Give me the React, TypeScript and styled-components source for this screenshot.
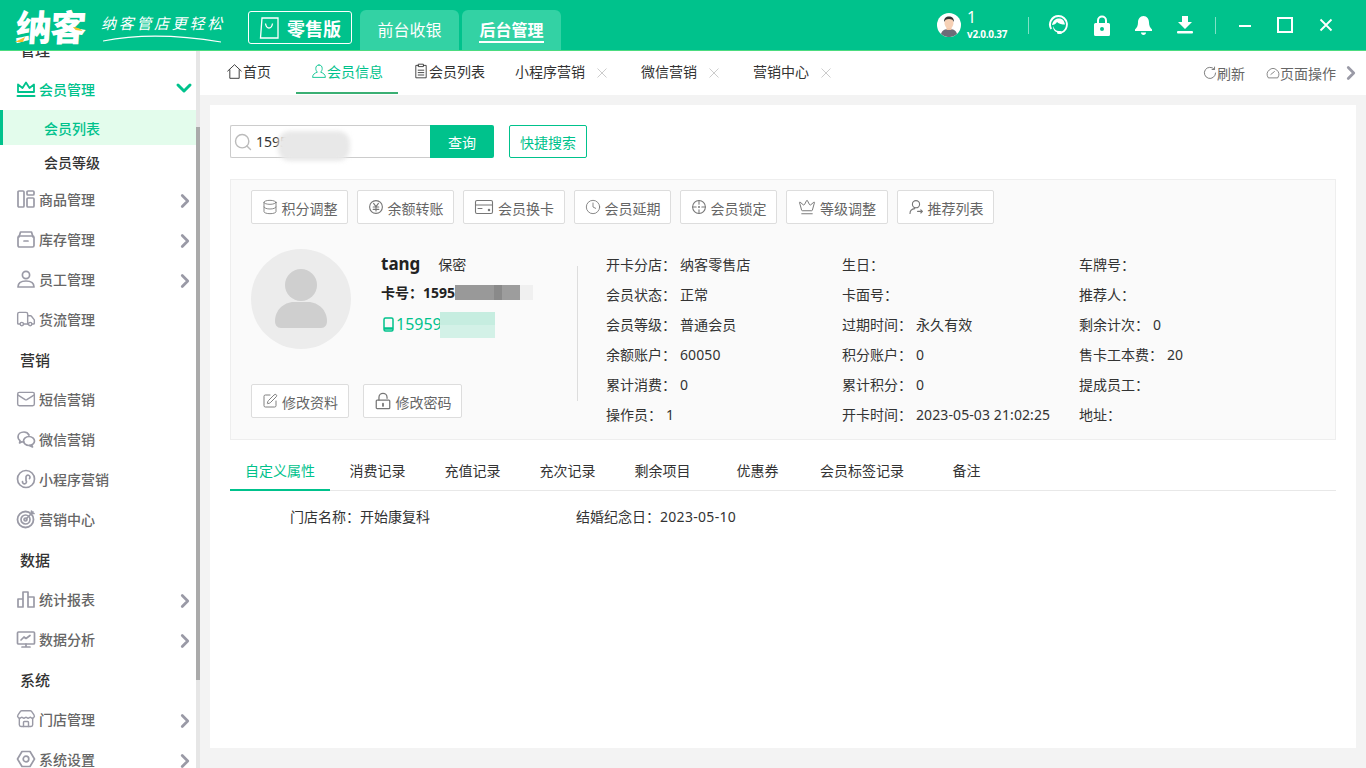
import React, { ReactNode } from "react";
import styled, { createGlobalStyle } from "styled-components";
import { ChevronRight, ChevronDown, Truck, Mail, Store, SquarePen, Database, Clock, Crown, Search } from "lucide-react";

const GREEN = "#00c28c";

const Global = createGlobalStyle`
  html, body {
    margin: 0;
    height: 100%;
    overflow: hidden;
    background: #f3f3f3;
    font-family: "Noto Sans", "Noto Sans CJK SC", sans-serif;
    font-size: 14px;
    color: #333;
  }
  * { box-sizing: border-box; }
`;

//header
const Page = styled.div`
  width: 1366px;
  height: 768px;
  display: flex;
  flex-direction: column;
  overflow: hidden;
`;

const Header = styled.header`
  height: 51px;
  flex: none;
  display: flex;
  align-items: flex-start;
  background: ${GREEN};
  border-bottom: 1px solid #4cdc80;
  padding-left: 15px;
`;

const Logo = styled.div`
  width: 83px;
  height: 50px;
  flex: none;
  position: relative;
  color: #fff;
  font-size: 36px;
  line-height: 56px;
  font-weight: 900;
  letter-spacing: -1.500px;
  padding-left: 1px;
  transform: skewX(-4deg);
  white-space: nowrap;
`;

const LogoMark = styled.svg`
  position: absolute;
  left: 0;
  top: 0;
`;

const Slogan = styled.div`
  width: 150px;
  flex: none;
  height: 50px;
  position: relative;
  color: #fff;
  font-size: 15px;
  font-weight: 400;
  line-height: 46px;
  letter-spacing: 2.700px;
  padding-left: 3px;
  font-style: italic;
  white-space: nowrap;
`;

const Swoosh = styled.svg`
  position: absolute;
  left: 5px;
  top: 34px;
`;

const Edition = styled.div`
  width: 104px;
  height: 33px;
  margin-top: 11px;
  flex: none;
  display: flex;
  align-items: center;
  gap: 8px;
  padding-left: 10px;
  border: 1px solid #fff;
  border-radius: 3px;
  color: #fff;
  font-size: 18px;
  font-weight: 700;
  white-space: nowrap;
`;

const ModeTabs = styled.div`
  display: flex;
  gap: 3px;
  margin-left: 8px;
  margin-top: 10px;
`;

const ModeTab = styled.div`
  width: 99px;
  height: 40px;
  background: #33d2a4;
  border-radius: 6px 6px 0 0;
  color: #fff;
  font-size: 16px;
  display: flex;
  align-items: center;
  justify-content: center;
`;

const ModeLabel = styled.span<{ $active?: boolean }>`
  font-weight: ${({ $active }) => ($active ? 700 : 400)};
  border-bottom: 2px solid ${({ $active }) => ($active ? "#fff" : "transparent")};
  line-height: 22px;
  margin-top: 2px;
`;

const HeaderRight = styled.div`
  margin-left: auto;
  height: 50px;
  display: flex;
  align-items: center;
  color: #fff;
`;

const UserBox = styled.div`
  display: flex;
  align-items: center;
  gap: 6px;
  width: 91px;
`;

const UserText = styled.div`
  display: flex;
  flex-direction: column;
  line-height: 17px;
  font-size: 16px;
`;

const Version = styled.span`
  font-family: "Open Sans", sans-serif;
  font-size: 10px;
  font-weight: 700;
  line-height: 14px;
  letter-spacing: -0.300px;
  margin-top: 1px;
`;

const Sep = styled.i`
  width: 1px;
  height: 17px;
  background: rgba(255, 255, 255, 0.5);
`;

const ToolIcons = styled.div`
  display: flex;
  align-items: center;
  gap: 25px;
  margin: 0 22px 0 19px;
`;

const WinControls = styled.div`
  display: flex;
  align-items: center;
  gap: 26px;
  margin: 0 33px 0 23px;
`;

//body
const Body = styled.div`
  flex: 1;
  display: flex;
  min-height: 0;
`;

const Side = styled.aside`
  width: 196px;
  flex: none;
  background: #fff;
  overflow: hidden;
`;

const SideList = styled.div`
  margin-top: -22px;
`;

const Track = styled.div`
  width: 4px;
  flex: none;
  background: #e6e6e6;
`;

const Thumb = styled.div`
  width: 4px;
  height: 553px;
  margin-top: 76px;
  background: #aaa;
`;

const SideHead = styled.div`
  height: 40px;
  line-height: 42px;
  padding-left: 20px;
  font-size: 15px;
  font-weight: 500;
  color: #333;
`;

const SideItem = styled.div<{ $on?: boolean }>`
  height: 40px;
  display: flex;
  align-items: center;
  padding: 0 0 0 16px;
  gap: 3px;
  font-size: 14px;
  font-weight: 500;
  color: ${({ $on }) => ($on ? GREEN : "#666")};
  svg {
    flex: none;
  }
`;

const SideLabel = styled.span`
  flex: 1;
`;

const SubItem = styled.div<{ $on?: boolean }>`
  height: ${({ $on }) => ($on ? 35 : 34)}px;
  margin-top: ${({ $on }) => ($on ? 1 : 0)}px;
  line-height: ${({ $on }) => ($on ? 37 : 36)}px;
  padding-left: ${({ $on }) => ($on ? 41 : 44)}px;
  font-weight: 500;
  color: ${({ $on }) => ($on ? GREEN : "#333")};
  background: ${({ $on }) => ($on ? "#e3fcec" : "transparent")};
  border-left: ${({ $on }) => ($on ? `3px solid ${GREEN}` : "none")};
`;

const Main = styled.main`
  flex: 1;
  min-width: 0;
  display: flex;
  flex-direction: column;
`;

const TabBar = styled.nav`
  height: 44px;
  flex: none;
  background: #fff;
  display: flex;
  align-items: stretch;
  padding-left: 11px;
`;

const Tab = styled.div<{ $on?: boolean; $after?: number }>`
  padding: 0 15px;
  margin-right: ${({ $after }) => $after ?? 0}px;
  display: flex;
  align-items: center;
  height: 43px;
  padding-bottom: 1px;
  color: ${({ $on }) => ($on ? GREEN : "#333")};
  border-bottom: 2px solid ${({ $on }) => ($on ? "#3aaf73" : "transparent")};
  white-space: nowrap;
`;

const TabClose = styled.svg`
  margin: 4px 0 0 12px;
  flex: none;
`;

const TabTools = styled.div`
  margin-left: auto;
  display: flex;
  align-items: center;
  color: #666;
  padding-right: 4px;
`;

const TabTool = styled.span`
  display: flex;
  align-items: center;
  margin-right: 21px;
`;

const TabMore = styled.span`
  display: flex;
  color: ${"#9a9aa6"};
  margin-left: -17px;
`;

const Card = styled.section`
  flex: 1;
  margin: 10px;
  margin-bottom: 20px;
  padding: 20px;
  background: #fff;
  min-height: 0;
`;

const SearchRow = styled.div`
  display: flex;
  height: 33px;
  position: relative;
`;

const SearchBox = styled.div`
  width: 200px;
  border: 1px solid #ccc;
  border-right: none;
  border-radius: 2px 0 0 2px;
  display: flex;
  align-items: center;
  padding-left: 2px;
  gap: 3px;
  color: #333;
  svg {
    color: #bbb;
  }
`;

const SearchBtn = styled.div`
  width: 64px;
  background: ${GREEN};
  color: #fff;
  border-radius: 0 2px 2px 0;
  display: flex;
  align-items: center;
  justify-content: center;
`;

const QuickBtn = styled.div`
  width: 78px;
  margin-left: 15px;
  border: 1px solid ${GREEN};
  border-radius: 2px;
  color: ${GREEN};
  display: flex;
  align-items: center;
  justify-content: center;
`;

const Smudge = styled.div<{ $left: number; $top: number; $w: number; $h: number; $bg: string }>`
  position: absolute;
  left: ${({ $left }) => $left}px;
  top: ${({ $top }) => $top}px;
  width: ${({ $w }) => $w}px;
  height: ${({ $h }) => $h}px;
  background: ${({ $bg }) => $bg};
`;

const SoftSmudge = styled(Smudge)`
  border-radius: 12px;
  filter: blur(2px);
`;

const Panel = styled.div`
  margin-top: 21px;
  height: 261px;
  background: #fafafa;
  border: 1px solid #eee;
  padding: 10px 20px;
`;

const ActionRow = styled.div`
  display: flex;
  gap: 9px;
`;

const ActionBtn = styled.div<{ $w: number }>`
  width: ${({ $w }) => $w}px;
  height: 34px;
  flex: none;
  display: flex;
  align-items: center;
  justify-content: center;
  gap: 4px;
  padding-top: 2px;
  background: #fff;
  border: 1px solid #ddd;
  border-radius: 2px;
  color: #666;
  svg {
    color: #777;
    flex: none;
    margin-top: -2px;
  }
`;

const Profile = styled.div`
  display: flex;
  margin-top: 25px;
`;

const ProfileLeft = styled.div`
  width: 326px;
  flex: none;
  position: relative;
`;

const ProfileTop = styled.div`
  display: flex;
  gap: 30px;
  height: 135px;
`;

const Facts = styled.div`
  display: flex;
  flex-direction: column;
`;

const NameRow = styled.div`
  display: flex;
  align-items: baseline;
  gap: 18px;
  height: 30px;
  line-height: 30px;
`;

const Name = styled.b`
  font-size: 17px;
  color: #222;
`;

const CardNo = styled.div`
  height: 30px;
  line-height: 27px;
  font-weight: 700;
  color: #222;
`;

const Phone = styled.div`
  height: 30px;
  display: flex;
  align-items: center;
  gap: 2px;
  color: ${GREEN};
  font-size: 16px;
  margin-left: 2px;
`;

const EditRow = styled.div`
  display: flex;
  gap: 14px;
`;

const Divider = styled.div`
  width: 1px;
  height: 135px;
  margin-top: 17px;
  background: #ddd;
  flex: none;
`;

const InfoGrid = styled.div`
  flex: 1;
  display: grid;
  grid-template-columns: 236px 237px 1fr;
  grid-auto-rows: 30px;
  margin-left: 28px;
  align-items: center;
`;

const InfoCell = styled.div`
  display: flex;
  align-items: baseline;
  gap: 4px;
  white-space: nowrap;
`;

const InfoValue = styled.span`
  letter-spacing: 0.100px;
`;

const DetailTabs = styled.div`
  display: flex;
  height: 51px;
  border-bottom: 1px solid #e8e8e8;
`;

const DetailTab = styled.div<{ $on?: boolean }>`
  min-width: 95px;
  padding: 10px 15px 0;
  height: 51px;
  display: flex;
  align-items: center;
  justify-content: center;
  color: ${({ $on }) => ($on ? GREEN : "#333")};
  border-bottom: 2px solid ${({ $on }) => ($on ? GREEN : "transparent")};
`;

const AttrRow = styled.div`
  display: flex;
  margin-top: 16px;
  padding-left: 60px;
  line-height: 20px;
`;

const AttrItem = styled.div<{ $w: number }>`
  width: ${({ $w }) => $w}px;
`;

const AttrDate = styled.span`
  letter-spacing: 0.300px;
`;

const Svg: React.FC<{ size?: number; children: ReactNode; sw?: number }> = ({ size = 20, children, sw = 1.7 }) => (
  <svg width={size} height={size} viewBox="0 0 20 20" fill="none" stroke="currentColor" strokeWidth={sw} strokeLinecap="round" strokeLinejoin="round">
    {children}
  </svg>
);

const GRAY = "#9a9aa6";

const Grey = styled.span`
  display: flex;
  color: ${GRAY};
`;

const More = styled(Grey)`
  margin-top: 3px;
`;

const Open = styled.span`
  display: flex;
  margin-top: -2px;
`;

const CrownLine = () => (
  <Svg>
    <path d="M2 13V5.500l4.500 3.500L10 3.500 13.500 9 18 5.500V13Z" strokeWidth="1.800" />
    <path d="M1.500 17h17" strokeWidth="2" />
  </Svg>
);
const GoodsIcon = () => <Svg><rect x="2" y="2" width="6" height="16" rx="1" /><rect x="11" y="2" width="7" height="4" rx="1" /><rect x="11" y="9" width="7" height="9" rx="1" /></Svg>;
const StockIcon = () => <Svg><path d="M3 8l1.500-5h11L17 8" /><rect x="2" y="7" width="16" height="11" rx="1.500" /><path d="M8 12h4" /></Svg>;
const StaffIcon = () => <Svg><circle cx="10" cy="6" r="3.600" /><path d="M2 18c0-4 3-6 8-6s8 2 8 6Z" /></Svg>;
const WechatIcon = () => <Svg><path d="M13 6C12 4 10.500 3 8 3 4.500 3 2 5.200 2 8c0 1.500.8 2.900 2 3.800L3.600 14l2.300-1.200c.7.200 1.300.200 2.100.200" /><ellipse cx="13" cy="12" rx="5.500" ry="4.500" /><path d="M15.500 16l1 2-3-1.500" /></Svg>;
const MiniIcon = () => <Svg><circle cx="10" cy="10" r="8.500" /><path d="M6.500 12.500a2 2 0 1 0 3.500-1V8.500a2 2 0 1 1 3.500 1" /></Svg>;
const TargetIcon = () => <Svg><circle cx="9.500" cy="10.500" r="8" strokeWidth="1.800" /><circle cx="9.500" cy="10.500" r="4.500" /><circle cx="9.500" cy="10.500" r="1.500" /><path d="M10 10l7-7M15.500 2v2.500H18" /></Svg>;
const ChartIcon = () => <Svg><path d="M2 18V10h5v8M7 18V3h5v15M12 18V8h6v10ZM2 18h5" /></Svg>;
const ScreenIcon = () => <Svg><rect x="1.500" y="3" width="17" height="12" rx="1" /><path d="M5 11l3-3 2 1.500L14 6.500M10 15v3M6 18h8" /></Svg>;
const GearIcon = () => <Svg><path d="M6 2.500h8L18.500 10 14 17.500H6L1.500 10Z" /><circle cx="10" cy="10" r="2.800" /></Svg>;

const YenIcon = () => <Svg size={16} sw={1.400}><circle cx="10" cy="10" r="8" /><path d="M7 5.500l3 4 3-4M6.500 10h7M6.500 13h7M10 10v5" /></Svg>;
const WalletIcon = () => <Svg size={20} sw={1.100}><rect x="1.500" y="3.500" width="17" height="13" rx="1.500" /><path d="M1.500 8h17M4 11.500h4" /><circle cx="15" cy="13" r=".7" /></Svg>;
const AimIcon = () => <Svg size={16} sw={1.300}><circle cx="10" cy="10" r="8" /><path d="M10 2v4.500M10 13.500V18M2 10h4.500M13.500 10H18" /><circle cx="10" cy="10" r=".6" /></Svg>;
const ReferIcon = () => <Svg size={16} sw={1.400}><circle cx="10" cy="6.500" r="4.500" /><path d="M2.500 18c0-3.500 2.500-5.500 6-6M12 15.500h6M16 13.500l2 2-2 2" /></Svg>;
const LockOutline = () => <Svg size={18} sw={1.400}><rect x="2.500" y="9" width="15" height="9.500" rx="1" /><path d="M5.500 9V6a4.500 4.500 0 0 1 9 0v1" /><path d="M10 13v2.500" strokeWidth="2" /></Svg>;

const HomeIcon = () => <Svg size={17} sw={1.100}><path d="M2 9.500 10 2l8 7.500M4.500 8v10h11V8" /></Svg>;
const MemberIcon = () => <Svg size={16} sw={1.100}><path d="M10 2.500c-2.500 0-4 1.500-4 4.500 0 2 1 3.500 2 4.500-3 1-6 2.500-6 6.500h16c0-4-3-5.500-6-6.500 1-1 2-2.500 2-4.500 0-3-1.500-4.500-4-4.500Z" /></Svg>;
const ClipIcon = () => <Svg size={16} sw={1.100}><path d="M7 3H3.500v15.500h13V3H13" /><rect x="7" y="1.500" width="6" height="3" /><path d="M6.500 9h7M6.500 12h7M6.500 15h7" /></Svg>;
const RefreshIcon = () => <Svg size={14} sw={1.200}><path d="M16 4.500a8 8 0 1 0 2 5.500M16.500 1.500v3.500H13" /></Svg>;
const DialIcon = () => <Svg size={14} sw={1.100}><path d="M3 16.500a8.300 8.300 0 1 1 14 0ZM7 12l5-4" /></Svg>;

const CloseMark = () => (
  <TabClose width="10" height="10" viewBox="0 0 10 10" stroke="#ccc" strokeWidth="1">
    <path d="M.5.5l9 9M9.500.5l-9 9" />
  </TabClose>
);

const BagIcon = () => (
  <svg width="20" height="22" viewBox="0 0 20 22" fill="none" stroke="#fff" strokeWidth="1.300">
    <path d="M3 1h16v20H1.500Z" />
    <path d="M6.500 6.500c.5 3 2 4.500 3.500 4.500s3-1.500 3.500-4.500" />
  </svg>
);

const HeadsetIcon = () => (
  <svg width="21" height="22" viewBox="0 0 21 22" fill="#fff">
    <path d="M10.500 1a9.500 9.500 0 0 0-8 14.600l1.500-1A7.700 7.700 0 0 1 3 10.500 7.500 7.500 0 0 1 10.500 3a7.500 7.500 0 0 1 7.500 7.500c0 3.500-2 6.300-5 7.300l.4 1.700A9.500 9.500 0 0 0 10.500 1Z" />
    <path d="M4 11C5 6 8 4.500 11 4.500s5 1.500 6 6c-3 0-6-.5-8-2.500-1 2-3 3-5 3Z" />
    <path d="M5 12c1 3 3 5 6 5v1.500C7 18.500 5 16 5 12Z" />
    <rect x="9" y="17" width="5" height="3" rx="1.500" />
  </svg>
);

const LockIcon = () => (
  <svg width="16" height="21" viewBox="0 0 16 21" fill="#fff">
    <path fillRule="evenodd" d="M3 8V5.500a5 5 0 0 1 10 0V8h1.500A1.500 1.500 0 0 1 16 9.500V19.500a1.500 1.500 0 0 1-1.500 1.500h-13A1.500 1.500 0 0 1 0 19.500V9.500A1.500 1.500 0 0 1 1.500 8ZM5 8h6V5.500a3 3 0 0 0-6 0ZM8 12a2 2 0 1 0 0 4 2 2 0 0 0 0-4Z" />
  </svg>
);

const BellIcon = () => (
  <svg width="17" height="19" viewBox="0 0 17 19" fill="#fff">
    <path d="M8.500 0C5 0 3 3 3 6.500c0 3-1 5-3 7v1.500h17v-1.500c-2-2-3-4-3-7C14 3 12 0 8.500 0Z" />
    <path d="M6 16.500h5c0 1.500-1 2.500-2.500 2.500S6 18 6 16.500Z" />
  </svg>
);

const DownIcon = () => (
  <svg width="16" height="18" viewBox="0 0 16 18" fill="#fff">
    <path d="M5 0h6v6h4l-7 7-7-7h4Z" />
    <rect x="0" y="15" width="16" height="2.500" rx="1" />
  </svg>
);

const AvatarSmall = () => (
  <svg width="24" height="24" viewBox="0 0 24 24">
    <circle cx="12" cy="12" r="12" fill="#fff" />
    <path d="M4 21c1-4 4-5 8-5s7 1 8 5a12 12 0 0 1-16 0Z" fill="#6d6d78" />
    <rect x="9.500" y="12" width="5" height="5" fill="#f0c3a5" />
    <ellipse cx="12" cy="10" rx="4.500" ry="5.500" fill="#f6d0b5" />
    <path d="M7 9c0-4 2-5.500 5-5.500s5 1.500 5 5.500c-1-2-2-3-5-3s-4 1-5 3Z" fill="#333" />
  </svg>
);

const BigAvatar = () => (
  <svg width="100" height="100" viewBox="0 0 100 100">
    <circle cx="50" cy="50" r="50" fill="#ececec" />
    <circle cx="50" cy="36" r="16" fill="#cfcfcf" />
    <path d="M24 72c0-10 8-19 19-19h14c11 0 19 9 19 19 0 4-2 7-6 7H30c-4 0-6-3-6-7Z" fill="#cfcfcf" />
  </svg>
);

const PhoneIcon = () => (
  <svg width="11" height="15" viewBox="0 0 11 15" fill="none" stroke={GREEN} strokeWidth="1.500">
    <rect x="1" y="1" width="9" height="13" rx="1.500" />
    <path d="M1 11.500h9" strokeWidth="2.500" />
  </svg>
);

const menu: Array<{ head?: string; icon?: ReactNode; label?: string; more?: boolean }> = [
  { label: "商品管理", icon: <GoodsIcon />, more: true },
  { label: "库存管理", icon: <StockIcon />, more: true },
  { label: "员工管理", icon: <StaffIcon />, more: true },
  { label: "货流管理", icon: <Truck size={20} strokeWidth={1.700} /> },
  { head: "营销" },
  { label: "短信营销", icon: <Mail size={20} strokeWidth={1.700} /> },
  { label: "微信营销", icon: <WechatIcon /> },
  { label: "小程序营销", icon: <MiniIcon /> },
  { label: "营销中心", icon: <TargetIcon /> },
  { head: "数据" },
  { label: "统计报表", icon: <ChartIcon />, more: true },
  { label: "数据分析", icon: <ScreenIcon />, more: true },
  { head: "系统" },
  { label: "门店管理", icon: <Store size={20} strokeWidth={1.700} />, more: true },
  { label: "系统设置", icon: <GearIcon />, more: true },
];

const actions: Array<{ label: string; w: number; icon: ReactNode }> = [
  { label: "积分调整", w: 97, icon: <Database size={16} strokeWidth={1.300} /> },
  { label: "余额转账", w: 97, icon: <YenIcon /> },
  { label: "会员换卡", w: 102, icon: <WalletIcon /> },
  { label: "会员延期", w: 97, icon: <Clock size={16} strokeWidth={1.300} /> },
  { label: "会员锁定", w: 97, icon: <AimIcon /> },
  { label: "等级调整", w: 102, icon: <Crown size={18} strokeWidth={1.300} /> },
  { label: "推荐列表", w: 97, icon: <ReferIcon /> },
];

const info: Array<[string, string]> = [
  ["开卡分店：", "纳客零售店"], ["生日：", ""], ["车牌号：", ""],
  ["会员状态：", "正常"], ["卡面号：", ""], ["推荐人：", ""],
  ["会员等级：", "普通会员"], ["过期时间：", "永久有效"], ["剩余计次：", "0"],
  ["余额账户：", "60050"], ["积分账户：", "0"], ["售卡工本费：", "20"],
  ["累计消费：", "0"], ["累计积分：", "0"], ["提成员工：", ""],
  ["操作员：", "1"], ["开卡时间：", "2023-05-03 21:02:25"], ["地址：", ""],
];

const details = ["自定义属性", "消费记录", "充值记录", "充次记录", "剩余项目", "优惠券", "会员标签记录", "备注"];

export default function App() {
  return (
    <Page>
      <Global />
      <Header>
        <Logo>
          纳客
          <LogoMark width="83" height="50" viewBox="0 0 83 50">
            <path d="M1 42l10-5-2 5Z" fill="#f5c12e" />
            <path d="M58 27c3 0 7 1 10 4l-7-1Z" fill="#f5c12e" />
          </LogoMark>
        </Logo>
        <Slogan>
          纳客管店更轻松
          <Swoosh width="120" height="10" viewBox="0 0 120 10" fill="none" stroke="#fff">
            <path d="M0 7C30 1 70 0 118 8" strokeWidth="1.200" />
          </Swoosh>
        </Slogan>
        <Edition><BagIcon />零售版</Edition>
        <ModeTabs>
          <ModeTab><ModeLabel>前台收银</ModeLabel></ModeTab>
          <ModeTab><ModeLabel $active>后台管理</ModeLabel></ModeTab>
        </ModeTabs>
        <HeaderRight>
          <UserBox>
            <AvatarSmall />
            <UserText>1<Version>v2.0.0.37</Version></UserText>
          </UserBox>
          <Sep />
          <ToolIcons>
            <HeadsetIcon />
            <LockIcon />
            <BellIcon />
            <DownIcon />
          </ToolIcons>
          <Sep />
          <WinControls>
            <svg width="12" height="3" viewBox="0 0 12 3"><rect width="12" height="2" y="1" fill="#fff" /></svg>
            <svg width="16" height="16" viewBox="0 0 16 16" fill="none" stroke="#fff" strokeWidth="2"><rect x="1" y="1" width="14" height="14" /></svg>
            <svg width="14" height="14" viewBox="0 0 14 14" stroke="#fff" strokeWidth="1.800"><path d="M1.500 1.500l11 11M12.500 1.500l-11 11" /></svg>
          </WinControls>
        </HeaderRight>
      </Header>
      <Body>
        <Side>
          <SideList>
            <SideHead>管理</SideHead>
            <SideItem $on>
              <CrownLine />
              <SideLabel>会员管理</SideLabel>
              <Open><ChevronDown size={24} strokeWidth={3} /></Open>
            </SideItem>
            <SubItem $on>会员列表</SubItem>
            <SubItem>会员等级</SubItem>
            {menu.map((m, i) =>
              m.head ? (
                <SideHead key={i}>{m.head}</SideHead>
              ) : (
                <SideItem key={i}>
                  <Grey>{m.icon}</Grey>
                  <SideLabel>{m.label}</SideLabel>
                  {m.more && <More><ChevronRight size={22} strokeWidth={3} /></More>}
                </SideItem>
              )
            )}
          </SideList>
        </Side>
        <Track><Thumb /></Track>
        <Main>
          <TabBar>
            <Tab $after={10}><HomeIcon />首页</Tab>
            <Tab $on><MemberIcon />会员信息</Tab>
            <Tab><ClipIcon />会员列表</Tab>
            <Tab $after={4}>小程序营销<CloseMark /></Tab>
            <Tab $after={4}>微信营销<CloseMark /></Tab>
            <Tab>营销中心<CloseMark /></Tab>
            <TabTools>
              <TabTool><RefreshIcon />刷新</TabTool>
              <TabTool><DialIcon />页面操作</TabTool>
              <TabMore><ChevronRight size={22} strokeWidth={3} /></TabMore>
            </TabTools>
          </TabBar>
          <Card>
            <SearchRow>
              <SearchBox><Search size={20} strokeWidth={1.700} />15959</SearchBox>
              <SearchBtn>查询</SearchBtn>
              <QuickBtn>快捷搜索</QuickBtn>
              <SoftSmudge $left={48} $top={6} $w={72} $h={30} $bg="#e8e8e8" />
            </SearchRow>
            <Panel>
              <ActionRow>
                {actions.map((a) => (
                  <ActionBtn key={a.label} $w={a.w}>{a.icon}{a.label}</ActionBtn>
                ))}
              </ActionRow>
              <Profile>
                <ProfileLeft>
                  <ProfileTop>
                    <BigAvatar />
                    <Facts>
                      <NameRow><Name>tang</Name><span>保密</span></NameRow>
                      <CardNo>卡号：1595</CardNo>
                      <Phone><PhoneIcon />15959</Phone>
                    </Facts>
                  </ProfileTop>
                  <EditRow>
                    <ActionBtn $w={98}><SquarePen size={16} strokeWidth={1.400} />修改资料</ActionBtn>
                    <ActionBtn $w={99}><LockOutline />修改密码</ActionBtn>
                  </EditRow>
                  <Smudge $left={204} $top={36} $w={65} $h={15} $bg="linear-gradient(90deg,#999 0 60%,#8a8a8a 60% 72%,#9d9d9d 72% 100%)" />
                  <Smudge $left={269} $top={36} $w={13} $h={15} $bg="#f0f0f0" />
                  <Smudge $left={189} $top={63} $w={55} $h={26} $bg="linear-gradient(180deg,#c6ede0 0 50%,#d3f1e7 50% 100%)" />
                </ProfileLeft>
                <Divider />
                <InfoGrid>
                  {info.map(([k, v]) => (
                    <InfoCell key={k}><span>{k}</span><InfoValue>{v}</InfoValue></InfoCell>
                  ))}
                </InfoGrid>
              </Profile>
            </Panel>
            <DetailTabs>
              {details.map((d, i) => (
                <DetailTab key={d} $on={i === 0}>{d}</DetailTab>
              ))}
            </DetailTabs>
            <AttrRow>
              <AttrItem $w={286}>门店名称：开始康复科</AttrItem>
              <AttrItem $w={300}>结婚纪念日：<AttrDate>2023-05-10</AttrDate></AttrItem>
            </AttrRow>
          </Card>
        </Main>
      </Body>
    </Page>
  );
}
